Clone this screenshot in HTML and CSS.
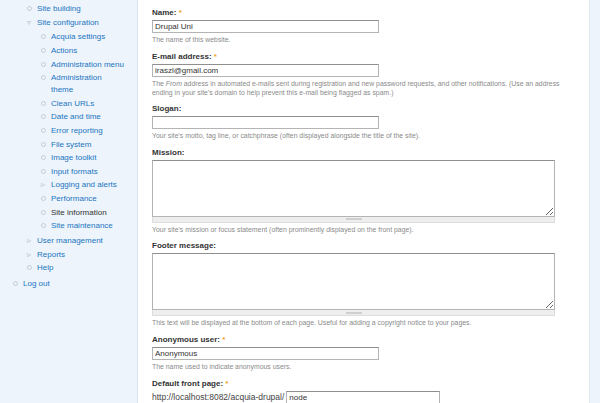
FILE: index.html
```html
<!DOCTYPE html>
<html lang="en">
<head>
  <meta charset="UTF-8" />
  <title>Site information</title>
  <link rel="stylesheet" href="styles.css">
</head>
<body>
  <div class="page">
    <div class="sidebar-left">
      <ul class="menu top">
        <li class="open">
          <ul class="menu">
            <li class="leaf"><a href="#">Site building</a></li>
            <li class="expanded"><a href="#">Site configuration</a>
              <ul class="menu">
                <li class="leaf"><a href="#">Acquia settings</a></li>
                <li class="leaf"><a href="#">Actions</a></li>
                <li class="leaf"><a href="#">Administration menu</a></li>
                <li class="leaf"><a href="#">Administration theme</a></li>
                <li class="leaf"><a href="#">Clean URLs</a></li>
                <li class="leaf"><a href="#">Date and time</a></li>
                <li class="leaf"><a href="#">Error reporting</a></li>
                <li class="leaf"><a href="#">File system</a></li>
                <li class="leaf"><a href="#">Image toolkit</a></li>
                <li class="leaf"><a href="#">Input formats</a></li>
                <li class="collapsed"><a href="#">Logging and alerts</a></li>
                <li class="leaf"><a href="#">Performance</a></li>
                <li class="leaf"><a href="#" class="active">Site information</a></li>
                <li class="leaf"><a href="#">Site maintenance</a></li>
              </ul>
            </li>
            <li class="collapsed"><a href="#">User management</a></li>
            <li class="collapsed"><a href="#">Reports</a></li>
            <li class="leaf"><a href="#">Help</a></li>
          </ul>
        </li>
        <li class="leaf"><a href="#">Log out</a></li>
      </ul>
    </div>

    <div class="main">
      <form>
        <div class="form-item">
          <label for="site-name">Name: <span class="req">*</span></label>
          <input type="text" id="site-name" class="text" value="Drupal Uni">
          <div class="description">The name of this website.</div>
        </div>

        <div class="form-item">
          <label for="site-mail">E-mail address: <span class="req">*</span></label>
          <input type="text" id="site-mail" class="text" value="iraszl@gmail.com">
          <div class="description">The <i>From</i> address in automated e-mails sent during registration and new password requests, and other notifications. (Use an address ending in your site's domain to help prevent this e-mail being flagged as spam.)</div>
        </div>

        <div class="form-item">
          <label for="site-slogan">Slogan:</label>
          <input type="text" id="site-slogan" class="text" value="">
          <div class="description">Your site's motto, tag line, or catchphrase (often displayed alongside the title of the site).</div>
        </div>

        <div class="form-item">
          <label for="site-mission">Mission:</label>
          <textarea id="site-mission"></textarea>
          <div class="grippie"><span></span></div>
          <div class="description">Your site's mission or focus statement (often prominently displayed on the front page).</div>
        </div>

        <div class="form-item">
          <label for="site-footer">Footer message:</label>
          <textarea id="site-footer"></textarea>
          <div class="grippie"><span></span></div>
          <div class="description">This text will be displayed at the bottom of each page. Useful for adding a copyright notice to your pages.</div>
        </div>

        <div class="form-item">
          <label for="anon">Anonymous user: <span class="req">*</span></label>
          <input type="text" id="anon" class="text" value="Anonymous">
          <div class="description">The name used to indicate anonymous users.</div>
        </div>

        <div class="form-item">
          <label for="frontpage">Default front page: <span class="req">*</span></label>
          <div class="field-prefix">
            <span>http://localhost:8082/acquia-drupal/</span>
            <input type="text" id="frontpage" class="text short" value="node">
          </div>
        </div>
      </form>
    </div>

    <div class="sidebar-right"></div>
  </div>
</body>
</html>
```

FILE: styles.css
```css
body {
  margin: 0;
  font-family: 'Liberation Sans', Arial, sans-serif;
  background-color: #fff;
  color: #333;
  overflow: hidden;
}

.page {
  display: flex;
  height: 403px;
}

/* left navigation */
.sidebar-left {
  box-sizing: border-box;
  width: 138px;
  flex: none;
  padding-right: 11px;
  background-color: #edf4fb;
  border-right: 1px solid #dbe5ee;
}

.menu {
  list-style: none;
  margin: 0;
  padding: 0;
  font-size: 8px;
  line-height: 12px;
}

.menu.top {
  padding: 1px 0 0 13px;
}

.menu li {
  padding-left: 10px;
  margin-bottom: 1.6px;
}

.menu li.open {
  padding-left: 10px;
  margin-bottom: 3.4px;
}

.menu li.open::before {
  display: none;
}

.menu li ul {
  padding-left: 4px;
  margin-top: 2.4px;
  margin-bottom: 3px;
}

.menu li::before {
  content: "";
  display: inline-block;
  box-sizing: border-box;
  width: 5px;
  height: 5px;
  margin-left: -10px;
  margin-right: 5px;
  border: 1px solid #c3ccd4;
  border-radius: 50%;
  vertical-align: 0;
}

.menu li.collapsed::before,
.menu li.expanded::before {
  content: "\25B9";
  border: none;
  border-radius: 0;
  width: 5px;
  height: auto;
  color: #b3bdc6;
  font-size: 8px;
  line-height: 8px;
}

.menu li.expanded::before {
  content: "\25BF";
}

.menu a {
  color: #1c74c1;
  text-decoration: none;
}

.menu a.active {
  color: #333;
}

/* form area */
.main {
  flex: 1;
  padding: 8px 0 0 14px;
}

.form-item {
  margin-bottom: 7.6px;
}

.form-item label {
  display: block;
  font-weight: bold;
  font-size: 8px;
  line-height: 10px;
  margin-bottom: 2px;
  color: #333;
}

.req {
  color: #f5a21c;
}

input.text {
  display: block;
  box-sizing: border-box;
  width: 227px;
  height: 13px;
  margin: 0;
  padding: 0 2px;
  border: 1px solid #b4b4b4;
  border-top-color: #8f8f8f;
  font-family: 'Liberation Sans', Arial, sans-serif;
  font-size: 8px;
  color: #333;
  background: #fff;
}

input.text.short {
  display: inline-block;
  width: 154px;
}

textarea {
  display: block;
  box-sizing: border-box;
  width: 403px;
  height: 57px;
  margin: 0;
  border: 1px solid #b4b4b4;
  border-top-color: #8f8f8f;
  font-family: 'Liberation Sans', Arial, sans-serif;
  font-size: 8px;
}

.grippie {
  box-sizing: border-box;
  width: 403px;
  height: 6px;
  background: #eee;
  border: 1px solid #ddd;
  border-top: none;
  display: flex;
  justify-content: center;
  align-items: center;
}

.grippie span {
  width: 16px;
  height: 2px;
  background: #cfcfcf;
}

.description {
  font-size: 6.9px;
  line-height: 9px;
  margin-top: 2px;
  color: #8a8a8a;
  max-width: 410px;
}

.field-prefix {
  display: flex;
  align-items: center;
  gap: 2px;
  font-size: 8.5px;
  color: #444;
}

/* right region */
.sidebar-right {
  width: 10px;
  flex: none;
  background-color: #edf4fb;
  border-left: 1px solid #e1e9f1;
}
```
